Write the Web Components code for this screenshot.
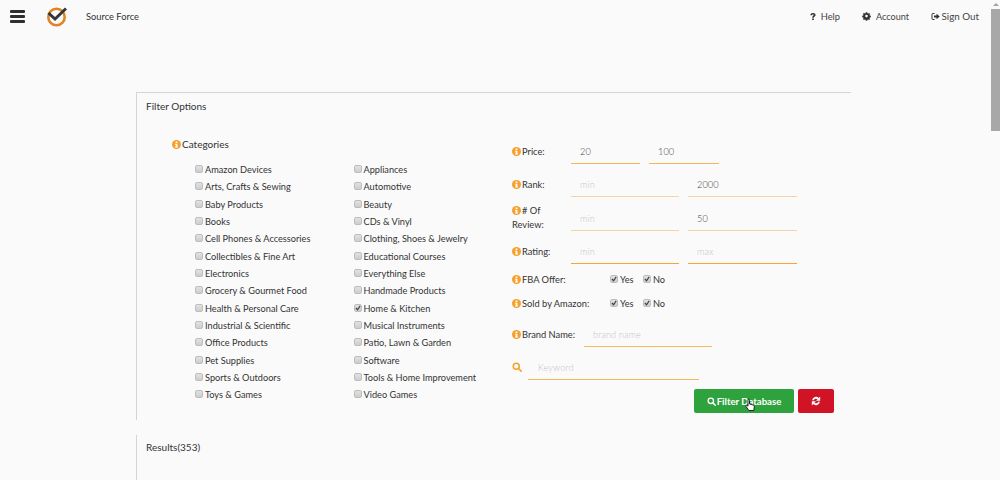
<!DOCTYPE html>
<html><head><meta charset="utf-8">
<style>
html,body{margin:0;height:480px;overflow:hidden;background:#fafafa}
body{font:10px Lato,sans-serif;color:#333;display:flex}
#page{flex:1;min-width:0}
</style></head>
<body>
<div id="page">
<app-nav></app-nav>
<panel-box title="Filter Options">
  <filter-form></filter-form>
</panel-box>
<panel-box title="Results(353)" class="results"></panel-box>
</div>
<fake-scroll></fake-scroll>
<script>
const INFO=`<svg width="9" height="9" viewBox="0 0 18 18" style="flex:none"><circle cx="9" cy="9" r="9" fill="#f6a02d"/><rect x="7.2" y="3" width="3.6" height="3" fill="#fff"/><path d="M6.2 7.4h4.6v5.6h1.2v2H6.2v-2h1.2V9.400H6.200z" fill="#fff"/></svg>`;
const SEARCH=(c,s)=>`<svg width="${s}" height="${s}" viewBox="0 0 20 20" style="flex:none"><circle cx="8.500" cy="8.500" r="6" fill="none" stroke="${c}" stroke-width="3"/><path d="M13 13l5.500 5.500" stroke="${c}" stroke-width="3.400" stroke-linecap="round"/></svg>`;
function def(name,css,html){
  customElements.define(name,class extends HTMLElement{
    connectedCallback(){
      if(this.shadowRoot)return;
      const r=this.attachShadow({mode:'open'});
      r.innerHTML=`<style>${css}</style>`+(typeof html==='function'?html(this):html);
    }
  });
}
def('nav-link',`:host{display:inline-flex;align-items:center;gap:var(--g,5px);color:#444;font-size:var(--f,9.300px);white-space:nowrap}
::slotted(svg){display:block}`,`<slot name="i"></slot><slot></slot>`);
def('app-nav',`:host{display:flex;align-items:center;height:33px;color:#333}
.burger{margin-left:10px;width:15px;display:flex;flex-direction:column;gap:2px;margin-top:-1px}
.burger i{display:block;height:3px;background:#2f2f33;border-radius:1px}
.logo{margin-left:22px;display:block;margin-top:0}
.name{margin-left:19px;font-size:9.300px;margin-top:-1px;color:#333}
.links{margin-left:auto;display:flex;gap:22px;margin-right:11px;color:#444;margin-top:-1px}`,
`<div class="burger"><i></i><i></i><i></i></div>
<svg class="logo" width="20" height="20" viewBox="0 0 20 20"><circle cx="9.500" cy="10" r="8.200" fill="none" stroke="#e08320" stroke-width="2.600"/><path d="M1.500 6l6.500 6L19 1.500" fill="none" stroke="#33363b" stroke-width="3"/></svg>
<div class="name">Source Force</div>
<div class="links">
<nav-link><svg slot="i" width="6" height="9" viewBox="0 0 14 18"><path d="M1 6c0-3 2.500-5 6-5s6 2 6 4.500c0 3.500-4 3.500-4 6.500H5c0-4.500 3.500-4.500 3.500-6.500 0-1-.6-1.500-1.500-1.500S5.200 4.500 5 6zM5 13.500h4V17H5z" fill="#333"/></svg>Help</nav-link>
<nav-link style="--f:9.100px"><svg slot="i" width="9" height="9" viewBox="0 0 18 18"><path d="M7.300 0h3.400l.4 2.400 1.700.7 2-1.400 2.400 2.400-1.400 2 .7 1.700 2.400.4v3.400l-2.400.4-.7 1.700 1.400 2-2.400 2.400-2-1.400-1.700.7-.4 2.400H7.300l-.4-2.400-1.700-.7-2 1.400L.8 15.600l1.400-2-.7-1.700L-.9 11.500V8.100l2.400-.4.7-1.700-1.400-2L3.200 1.600l2 1.400 1.700-.7zM9 6a3 3 0 1 0 0 6 3 3 0 0 0 0-6z" fill="#333" fill-rule="evenodd" transform="translate(1.100 .3) scale(.88)"/></svg>Account</nav-link>
<nav-link style="--g:1.500px;--f:9.800px"><svg slot="i" width="9" height="9" viewBox="0 0 18 18"><path d="M7 3H3.500A1.500 1.500 0 0 0 2 4.500v9A1.500 1.500 0 0 0 3.500 15H7" fill="none" stroke="#333" stroke-width="2"/><path d="M6 7h5V3.500L17.500 9 11 14.500V11H6z" fill="#333"/></svg>Sign Out</nav-link>
</div>`);
def('panel-box',`:host{display:block;margin-left:136px;margin-right:139px;border-left:1px solid #d4d4d4;border-top:1px solid #d4d4d4;margin-top:59px;height:328px;box-sizing:border-box;position:relative}
:host(.results){border-top:0;margin-top:15px;height:45px}
.t{padding:7px 9px 0;line-height:13px;font-size:10px;color:#333}
:host(.results) .t{padding-top:6px}`,
t=>`<div class="t">${t.getAttribute('title')}</div><slot></slot>`);
def('check-box',`:host{display:inline-flex;align-items:center;gap:2px;color:#333;font-size:9.200px;white-space:nowrap;height:17px}
b{width:6px;height:6px;border:1px solid #bdbdbd;border-radius:2px;background:linear-gradient(#e2e2e2,#cdcdcd);display:block;flex:none;position:relative;top:-.5px;box-sizing:content-box}
svg{display:block}`,
t=>`<b>${t.hasAttribute('checked')?'<svg width="6" height="6" viewBox="0 0 7 7"><path d="M1 3.500l2 2L6 1" fill="none" stroke="#444" stroke-width="1.400"/></svg>':''}</b><slot></slot>`);
def('line-input',`:host{display:flex;align-items:center;box-sizing:border-box;border-bottom:1px solid var(--c,#f9b75c);height:var(--h,25px);padding:0 var(--p,9px);font-size:9.200px;color:#444;font-weight:300;letter-spacing:.1px}
:host([ph]){color:#c4c4c4}`,`<slot></slot>`);
def('info-label',`:host{display:flex;align-items:center;gap:1px;color:#333;font-size:var(--fs,9.300px);white-space:nowrap}`,INFO+`<slot></slot>`);
def('field-row',`:host{display:grid;align-items:end;grid-template-columns:50px 69px 70px;column-gap:9px;height:var(--rh,33px)}
:host([wide]){grid-template-columns:50px 108px 109px}
.l{align-self:end;padding-bottom:6.500px;line-height:13px}
:host([multi]) .l{padding-bottom:0}`,
`<div class="l"><slot name="l"></slot></div><slot></slot>`);
def('filter-form',`:host{display:grid;grid-template-columns:340px 1fr;padding-top:25px}
.cats{padding-left:35px}
.head{height:13px;line-height:13px;--fs:10px}
.grid{display:grid;grid-template-columns:158.500px 1fr;grid-auto-rows:17.330px;margin:10px 0 0 23px;align-items:center}
.right{padding-left:35px;padding-top:0}
.stack{display:flex;flex-direction:column}
.wrap{white-space:normal;line-height:13px;width:50px;font-size:9.300px}
.radio{display:grid;grid-template-columns:98px 33px auto;align-items:center;height:24px;width:170px}
.brand{display:grid;grid-template-columns:72px 128px;align-items:end;height:25px;}
.kw{display:grid;grid-template-columns:16px 171px;align-items:end;height:25px}
.btns{display:flex;gap:4px;justify-content:flex-end;width:322px;margin-top:9px}
button{font:700 9.600px Lato,sans-serif;color:#fff;border:0;border-radius:2px;height:24px;display:flex;align-items:center;justify-content:center;gap:1px;padding:0}
.go{width:100px;background:#2ea23c;position:relative}
.re{width:36px;background:#d01425}
.cur{position:absolute;left:51px;top:9px}
.kwi{align-self:center}
`,()=>{
const c=[["Amazon Devices","Appliances"],["Arts, Crafts & Sewing","Automotive"],["Baby Products","Beauty"],["Books","CDs & Vinyl"],["Cell Phones & Accessories","Clothing, Shoes & Jewelry"],["Collectibles & Fine Art","Educational Courses"],["Electronics","Everything Else"],["Grocery & Gourmet Food","Handmade Products"],["Health & Personal Care","Home & Kitchen"],["Industrial & Scientific","Musical Instruments"],["Office Products","Patio, Lawn & Garden"],["Pet Supplies","Software"],["Sports & Outdoors","Tools & Home Improvement"],["Toys & Games","Video Games"]];
const esc=s=>s.replace(/&/g,'&amp;');
const grid=c.flat().map(s=>`<check-box${s==='Home & Kitchen'?' checked':''}>${esc(s)}</check-box>`).join('');
return `<div class="cats"><info-label class="head">Categories</info-label><div class="grid">${grid}</div></div>
<div class="right stack">
<field-row style="--rh:26px"><info-label slot="l">Price:</info-label><line-input style="--c:#f8b45a">20</line-input><line-input style="--c:#f8b45a">100</line-input></field-row>
<field-row wide><info-label slot="l">Rank:</info-label><line-input ph style="--c:#f3d3a8">min</line-input><line-input style="--c:#f3d3a8">2000</line-input></field-row>
<field-row wide multi style="--rh:34px"><div slot="l" class="wrap"><info-label style="display:inline-flex"># Of</info-label><br>Review:</div><line-input ph style="--c:#f3d3a8">min</line-input><line-input style="--c:#f3d3a8">50</line-input></field-row>
<field-row wide><info-label slot="l">Rating:</info-label><line-input ph style="--c:#f7a72f">min</line-input><line-input ph style="--c:#f7a72f">max</line-input></field-row>
<div class="radio" style="margin-top:3px"><info-label>FBA Offer:</info-label><check-box checked>Yes</check-box><check-box checked>No</check-box></div>
<div class="radio"><info-label>Sold by Amazon:</info-label><check-box checked>Yes</check-box><check-box checked>No</check-box></div>
<div class="brand" style="margin-top:7px"><info-label style="align-self:center">Brand Name:</info-label><line-input ph>brand name</line-input></div>
<div class="kw" style="margin-top:8px"><div class="kwi" style="margin-left:-.5px">${SEARCH('#f6a02d',10)}</div><line-input ph style="--p:10px">Keyword</line-input></div>
<div class="btns"><button class="go">${SEARCH('#fff',9)}Filter Database<svg class="cur" width="10" height="14" viewBox="0 0 10 14"><path d="M3 1.500c.8-.8 1.500 0 1.500 1v3.500l3.500 1c1 .3 1.500 1 1.300 2L8.800 12.500H3.800L1 8.500c-.5-1 .5-1.500 1.200-1l.8.7z" fill="#fff" stroke="#111" stroke-width=".9"/></svg></button>
<button class="re"><svg width="10" height="10" viewBox="0 0 18 18"><path d="M2 7.500A7.200 7.200 0 0 1 14 3.500L16.500 1v7.500H9l2.800-2.800A4.200 4.200 0 0 0 5.200 7.500zM16 10.500A7.200 7.200 0 0 1 4 14.500L1.500 17V9.500H9l-2.800 2.800a4.200 4.200 0 0 0 6.600-1.800z" fill="#fff"/></svg></button></div>
</div>`});
def('fake-scroll',`:host{display:flex;flex-direction:column;align-items:flex-end;width:10px;height:480px;background:#fafafa;flex:none}
.a{height:9px;width:9px;display:flex;align-items:center;justify-content:center}
.a i{display:block;border:3px solid transparent;border-bottom:3px solid #a3a3a3;border-top:0}
.t{width:9px;height:122px;background:#a8a8a8}`,`<div class="a"><i></i></div><div class="t"></div>`);
</script>
</body></html>
